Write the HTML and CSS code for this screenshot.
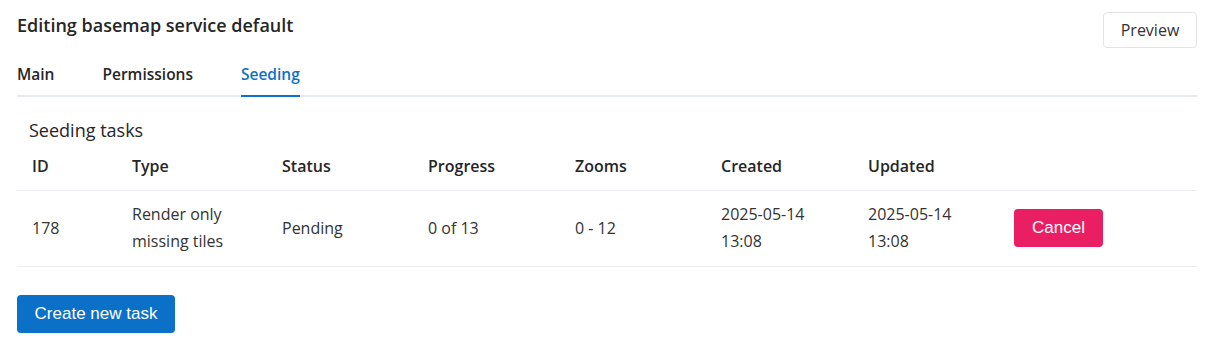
FILE: index.html
```html
<!DOCTYPE html>
<html lang="en">
<head>
<meta charset="utf-8">
<title>Editing basemap service default</title>
<link rel="stylesheet" href="styles.css">
</head>
<body>
<div class="page">
  <div class="header">
    <h1 class="title">Editing basemap service default</h1>
    <button class="btn btn-outline">Preview</button>
  </div>
  <div class="tabs">
    <div class="tab">Main</div>
    <div class="tab">Permissions</div>
    <div class="tab active">Seeding</div>
  </div>
  <div class="section">
    <h2 class="section-title">Seeding tasks</h2>
  </div>
  <table class="tasks">
    <colgroup>
      <col class="c-id"><col class="c-type"><col class="c-std"><col class="c-std2"><col class="c-std"><col class="c-std2"><col class="c-std"><col>
    </colgroup>
    <thead>
      <tr><th>ID</th><th>Type</th><th>Status</th><th>Progress</th><th>Zooms</th><th>Created</th><th>Updated</th><th></th></tr>
    </thead>
    <tbody>
      <tr>
        <td>178</td>
        <td>Render only<br>missing tiles</td>
        <td>Pending</td>
        <td>0 of 13</td>
        <td>0 - 12</td>
        <td>2025-05-14<br>13:08</td>
        <td>2025-05-14<br>13:08</td>
        <td><button class="btn btn-danger">Cancel</button></td>
      </tr>
    </tbody>
  </table>
  <button class="btn btn-primary create">Create new task</button>
</div>
</body>
</html>
```
FILE: styles.css
```css
* { box-sizing: border-box; }
body {
  margin: 0;
  background: #ffffff;
  font-family: "Open Sans", "Noto Sans", sans-serif;
  color: #2b2b2b;
}
.page {
  padding: 12px 16px 0 17px;
}
.header {
  display: flex;
  justify-content: space-between;
  align-items: flex-start;
}
.title {
  margin: 1px 0 0 0;
  font-size: 18px;
  line-height: 24px;
  font-weight: 600;
  color: #262626;
}
.btn {
  font-family: "Liberation Sans", Arial, sans-serif;
  font-size: 17px;
  border-radius: 4px;
  cursor: pointer;
}
.btn-outline {
  height: 36px;
  width: 94px;
  background: #fff;
  border: 1px solid #e1e3ea;
  color: #333;
  font-family: "Open Sans", sans-serif;
  font-size: 16px;
}
.tabs {
  display: flex;
  gap: 48px;
  margin-top: 14px;
  border-bottom: 2px solid #e6e9ef;
}
.tab {
  font-size: 15.5px;
  line-height: 24px;
  font-weight: 600;
  color: #262626;
  padding-bottom: 9px;
  margin-bottom: -2px;
  border-bottom: 2px solid transparent;
}
.tab.active {
  color: #0b72c9;
  border-bottom-color: #0b72c9;
}
.section {
  padding-left: 12px;
  margin-top: 21px;
}
.section-title {
  margin: 0;
  font-size: 18px;
  line-height: 24px;
  font-weight: 400;
  color: #262626;
}
.tasks {
  width: 100%;
  border-collapse: collapse;
  table-layout: fixed;
  font-size: 16px;
}
.c-id { width: 100px; }
.c-type { width: 150px; }
.c-std { width: 146px; }
.c-std2 { width: 147px; }
.tasks th {
  text-align: left;
  font-weight: 600;
  padding: 12px 15px;
  line-height: 24px;
  color: #262626;
  border-bottom: 1px solid #eceef4;
}
.tasks td {
  padding: 10px 15px 11px;
  line-height: 27px;
  color: #333;
  border-bottom: 1px solid #eceef4;
  vertical-align: middle;
}
.btn-danger {
  background: #e91e63;
  color: #fff;
  border: none;
  height: 38px;
  width: 89px;
}
.btn-primary {
  background: #0a70c8;
  color: #fff;
  border: none;
  height: 38px;
  width: 158px;
}
.create {
  margin-top: 28px;
}
```
